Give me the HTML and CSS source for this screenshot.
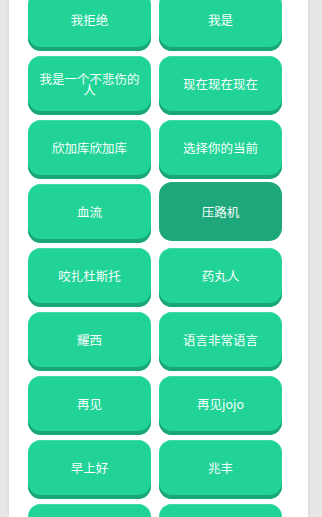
FILE: index.html
```html
<!DOCTYPE html>
<html lang="zh">
<head>
<meta charset="utf-8">
<link rel="stylesheet" href="styles.css">
</head>
<body>
<div class="page">
  <div class="panel">
    <div class="grid">
      <button class="btn">我拒绝</button>
      <button class="btn">我是</button>
      <button class="btn">我是一个不悲伤的人</button>
      <button class="btn">现在现在现在</button>
      <button class="btn">欣加库欣加库</button>
      <button class="btn">选择你的当前</button>
      <button class="btn">血流</button>
      <button class="btn pressed">压路机</button>
      <button class="btn">咬扎杜斯托</button>
      <button class="btn">药丸人</button>
      <button class="btn">耀西</button>
      <button class="btn">语言非常语言</button>
      <button class="btn">再见</button>
      <button class="btn">再见jojo</button>
      <button class="btn">早上好</button>
      <button class="btn">兆丰</button>
      <button class="btn"></button>
      <button class="btn"></button>
    </div>
  </div>
</div>
</body>
</html>
```
FILE: styles.css
```css
html, body {
  margin: 0;
  padding: 0;
  height: 100%;
  overflow: hidden;
}
body {
  background: #e7e7e5;
  font-family: "Noto Sans CJK SC", "Noto Sans", sans-serif;
}
.page {
  display: flex;
  padding-left: 9px;
  width: 299px;
  height: 100%;
}
.panel {
  flex: 1;
  background: #ffffff;
  box-shadow: 0 0 3px rgba(0, 0, 0, 0.12);
  padding: 0 26px 0 19px;
}
.grid {
  display: grid;
  grid-template-columns: 123px 123px;
  column-gap: 8px;
  row-gap: 5px;
  margin-top: -8px;
}
.btn {
  height: 59px;
  box-sizing: border-box;
  border: none;
  border-radius: 13px;
  background: #22d398;
  box-shadow: inset 0 -4px 0 #1aa57a, inset 0 1px 0 #3ddca8;
  color: #f6fffb;
  font-family: inherit;
  font-size: 12.5px;
  line-height: 11px;
  padding: 0 9px 4px;
  text-align: center;
}
.btn.pressed {
  background: #1ea77b;
  box-shadow: none;
  padding-bottom: 0;
  transform: translateY(-2px);
}
```
